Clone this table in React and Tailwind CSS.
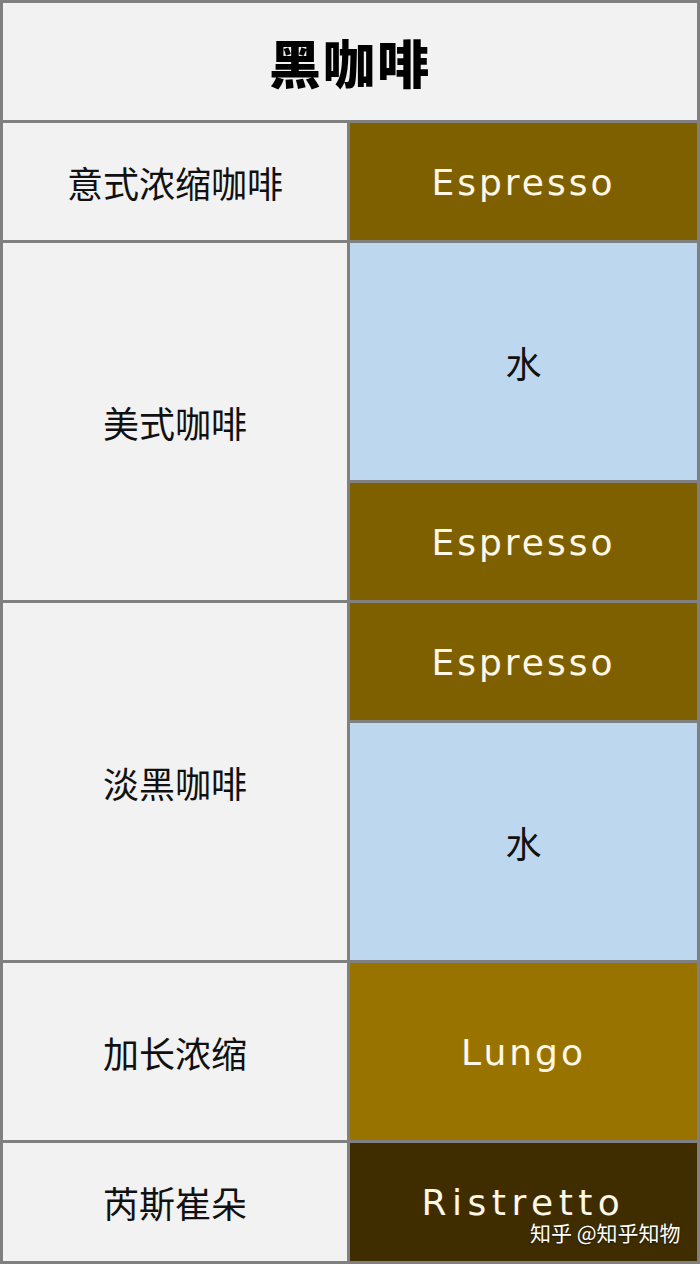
import React from 'react';

const cn = '"Noto Sans CJK SC", "Noto Sans", sans-serif';
const latin = '"DejaVu Sans", "Noto Sans CJK SC", sans-serif';

function Cell({ className = '', children, latinText }) {
  return (
    <div
      className={`flex items-center justify-center ${className}`}
      style={{ fontFamily: latinText ? latin : cn }}
    >
      {children}
    </div>
  );
}

export default function App() {
  return (
    <div className="relative w-[700px] h-[1264px] bg-[#808080] p-[3px]">
      <div className="grid h-full gap-[3px] grid-cols-[344px_347px] grid-rows-[117px_117px_237px_117px_117px_237px_177px_118px]">
        <Cell className="col-span-2 bg-[#f2f2f2] text-[52px] font-black text-black tracking-[2px]">黑咖啡</Cell>

        <Cell className="bg-[#f2f2f2] text-[36px] text-[#111]">意式浓缩咖啡</Cell>
        <Cell latinText className="bg-[#7f6000] text-[36px] text-[#fff8e8] tracking-[3px] pt-[2px]">Espresso</Cell>

        <Cell className="row-span-2 bg-[#f2f2f2] text-[36px] text-[#111]">美式咖啡</Cell>
        <Cell className="bg-[#bdd7ee] text-[36px] text-[#111]">水</Cell>
        <Cell latinText className="bg-[#7f6000] text-[36px] text-[#fff8e8] tracking-[3px] pt-[2px]">Espresso</Cell>

        <Cell className="row-span-2 bg-[#f2f2f2] text-[36px] text-[#111]">淡黑咖啡</Cell>
        <Cell latinText className="bg-[#7f6000] text-[36px] text-[#fff8e8] tracking-[3px] pt-[2px]">Espresso</Cell>
        <Cell className="bg-[#bdd7ee] text-[36px] text-[#111]">水</Cell>

        <Cell className="bg-[#f2f2f2] text-[36px] text-[#111]">加长浓缩</Cell>
        <Cell latinText className="bg-[#997300] text-[36px] text-[#fff8e8] tracking-[3px] pt-[2px]">Lungo</Cell>

        <Cell className="bg-[#f2f2f2] text-[36px] text-[#111]">芮斯崔朵</Cell>
        <Cell latinText className="bg-[#3f2d00] text-[36px] text-[#fff8e8] tracking-[5.5px] pt-[2px]">Ristretto</Cell>
      </div>
      <div
        className="absolute left-[530px] top-[1217px] text-[21px] text-white [text-shadow:0_1px_2px_rgba(0,0,0,0.6)]"
        style={{ fontFamily: cn }}
      >
        知乎 @知乎知物
      </div>
    </div>
  );
}
